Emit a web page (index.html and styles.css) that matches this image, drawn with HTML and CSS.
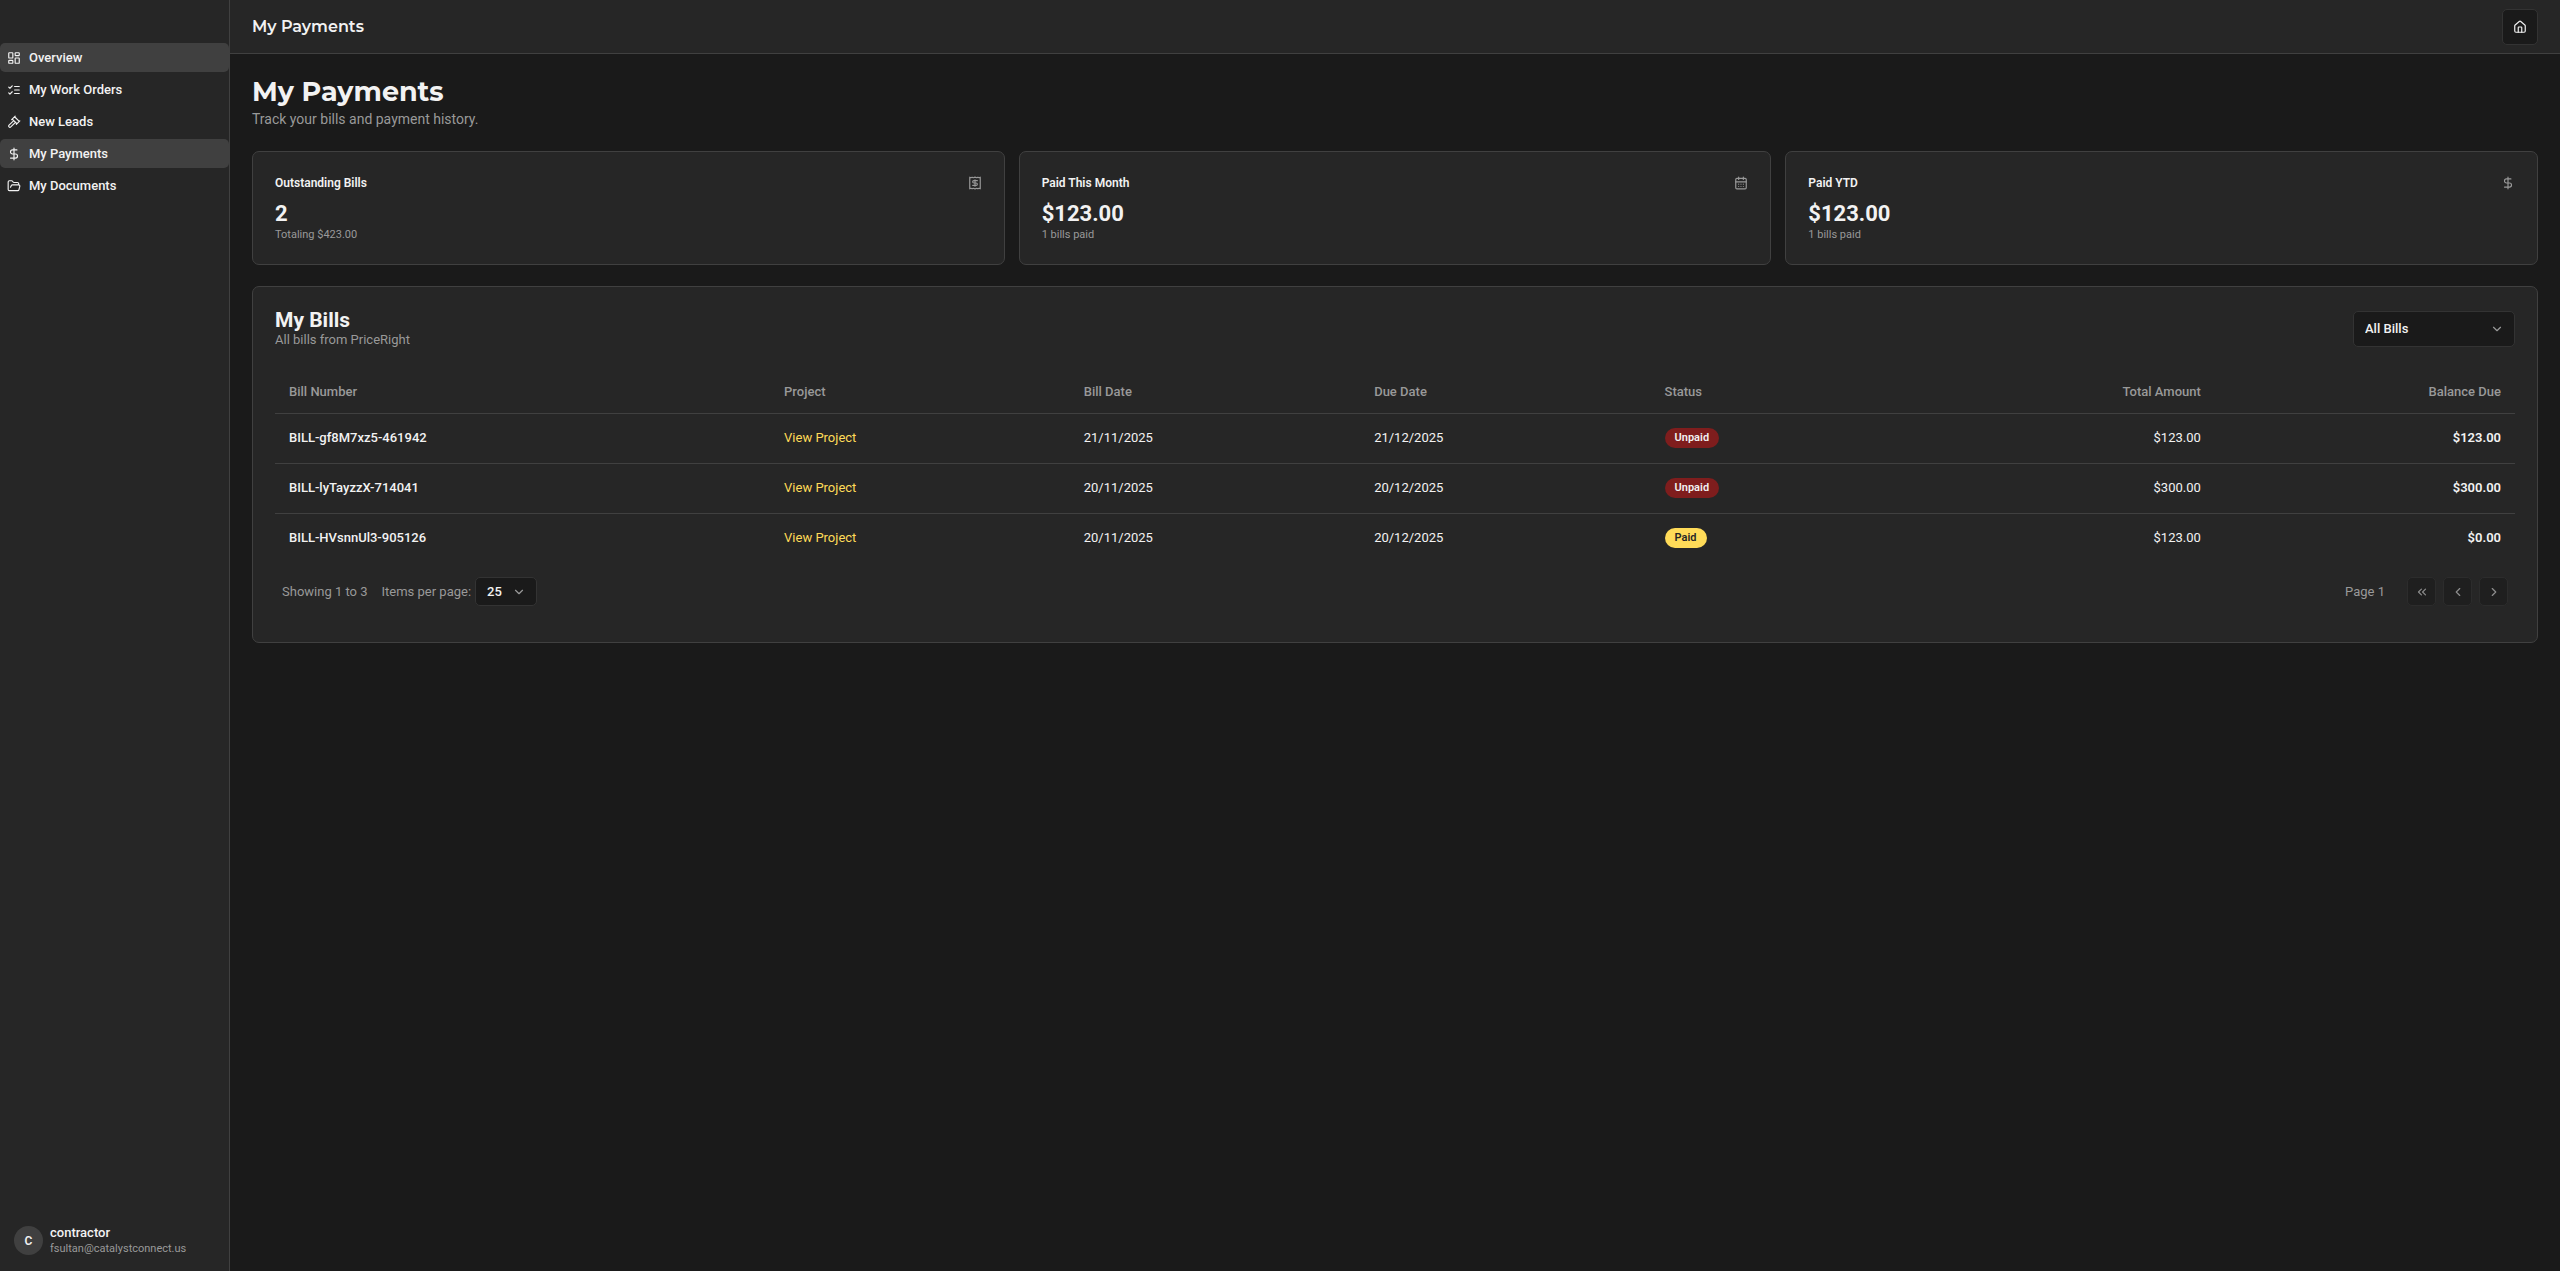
FILE: index.html
```html
<!DOCTYPE html>
<html lang="en">
<head>
<meta charset="utf-8">
<meta name="viewport" content="width=device-width, initial-scale=1">
<title>My Payments</title>
<link rel="stylesheet" href="styles.css">
</head>
<body>
<div class="app">
  <aside class="sidebar">
    <nav class="nav" aria-label="Main">
      <a class="nav-link active" href="#overview"><svg class="icon" viewBox="0 0 24 24"><rect x="3" y="3" width="7" height="9" rx="1"/><rect x="14" y="3" width="7" height="5" rx="1"/><rect x="14" y="12" width="7" height="9" rx="1"/><rect x="3" y="16" width="7" height="5" rx="1"/></svg>Overview</a>
      <a class="nav-link" href="#orders"><svg class="icon" viewBox="0 0 24 24"><path d="m3 17 2 2 4-4M3 7l2 2 4-4M13 6h8M13 12h8M13 18h8"/></svg>My Work Orders</a>
      <a class="nav-link" href="#leads"><svg class="icon" viewBox="0 0 24 24"><path d="m14.500 12.500-8 8a2.119 2.119 0 1 1-3-3l8-8M16 16l6-6M8 8l6-6M9 7l8 8M21 11l-8-8"/></svg>New Leads</a>
      <a class="nav-link active" href="#payments" aria-current="page"><svg class="icon" viewBox="0 0 24 24"><path d="M12 2v20M17 5H9.500a3.500 3.500 0 0 0 0 7h5a3.500 3.500 0 0 1 0 7H6"/></svg>My Payments</a>
      <a class="nav-link" href="#documents"><svg class="icon" viewBox="0 0 24 24"><path d="m6 14 1.500-2.900A2 2 0 0 1 9.240 10H20a2 2 0 0 1 1.940 2.500l-1.540 6a2 2 0 0 1-1.950 1.500H4a2 2 0 0 1-2-2V5a2 2 0 0 1 2-2h3.900a2 2 0 0 1 1.690.9l.81 1.200a2 2 0 0 0 1.670.9H18a2 2 0 0 1 2 2v2"/></svg>My Documents</a>
    </nav>
    <div class="user">
      <span class="avatar">C</span>
      <div class="user-text">
        <div class="user-name">contractor</div>
        <div class="user-mail">fsultan@catalystconnect.us</div>
      </div>
    </div>
  </aside>
  <div class="page">
    <header class="topbar">
      <span class="topbar-title">My Payments</span>
      <button class="home-button" type="button" aria-label="Home"><svg class="icon" viewBox="0 0 24 24"><path d="M15 21v-8a1 1 0 0 0-1-1h-4a1 1 0 0 0-1 1v8"/><path d="M3 10a2 2 0 0 1 .709-1.528l7-6a2 2 0 0 1 2.582 0l7 6A2 2 0 0 1 21 10v9a2 2 0 0 1-2 2H5a2 2 0 0 1-2-2z"/></svg></button>
    </header>
    <main class="content">
      <div>
        <h1 class="page-title">My Payments</h1>
        <p class="page-note">Track your bills and payment history.</p>
      </div>
      <section class="stats">
        <article class="card">
          <div class="stat-head"><h2 class="stat-title">Outstanding Bills</h2><svg class="icon" viewBox="0 0 24 24"><path d="M3 2v20l2-1 2 1 2-1 3 1 3-1 2 1 2-1 2 1V2l-2 1-2-1-2 1-3-1-3 1-2-1-2 1Z"/><path d="M16 8h-6a2 2 0 1 0 0 4h4a2 2 0 1 1 0 4H8M12 17.500v-11"/></svg></div>
          <div class="stat-value">2</div>
          <div class="stat-note">Totaling $423.00</div>
        </article>
        <article class="card">
          <div class="stat-head"><h2 class="stat-title">Paid This Month</h2><svg class="icon" viewBox="0 0 24 24"><path d="M8 2v4M16 2v4M3 10h18M8 14h.01M12 14h.01M16 14h.01M8 18h.01M12 18h.01M16 18h.01"/><rect x="3" y="4" width="18" height="18" rx="2"/></svg></div>
          <div class="stat-value">$123.00</div>
          <div class="stat-note">1 bills paid</div>
        </article>
        <article class="card">
          <div class="stat-head"><h2 class="stat-title">Paid YTD</h2><svg class="icon" viewBox="0 0 24 24"><path d="M12 2v20M17 5H9.500a3.500 3.500 0 0 0 0 7h5a3.500 3.500 0 0 1 0 7H6"/></svg></div>
          <div class="stat-value">$123.00</div>
          <div class="stat-note">1 bills paid</div>
        </article>
      </section>
      <section class="card">
        <div class="bills-head">
          <div>
            <h2 class="bills-title">My Bills</h2>
            <p class="bills-note">All bills from PriceRight</p>
          </div>
          <div class="select filter">
            <select aria-label="Filter bills"><option>All Bills</option><option>Unpaid</option><option>Paid</option></select>
            <svg class="icon chevron" viewBox="0 0 24 24"><path d="m6 9 6 6 6-6"/></svg>
          </div>
        </div>
        <table class="bills">
          <thead>
            <tr><th>Bill Number</th><th>Project</th><th>Bill Date</th><th>Due Date</th><th>Status</th><th class="num">Total Amount</th><th class="num">Balance Due</th></tr>
          </thead>
          <tbody>
            <tr><td class="medium">BILL-gf8M7xz5-461942</td><td><a class="link" href="#project">View Project</a></td><td>21/11/2025</td><td>21/12/2025</td><td><span class="badge unpaid">Unpaid</span></td><td class="num">$123.00</td><td class="num strong">$123.00</td></tr>
            <tr><td class="medium">BILL-lyTayzzX-714041</td><td><a class="link" href="#project">View Project</a></td><td>20/11/2025</td><td>20/12/2025</td><td><span class="badge unpaid">Unpaid</span></td><td class="num">$300.00</td><td class="num strong">$300.00</td></tr>
            <tr><td class="medium">BILL-HVsnnUl3-905126</td><td><a class="link" href="#project">View Project</a></td><td>20/11/2025</td><td>20/12/2025</td><td><span class="badge paid">Paid</span></td><td class="num">$123.00</td><td class="num strong">$0.00</td></tr>
          </tbody>
        </table>
        <div class="pager">
          <div class="pager-group">
            <span>Showing 1 to 3</span>
            <div class="per-page">
              <label for="per-page">Items per page:</label>
              <div class="select size">
                <select id="per-page"><option>25</option><option>50</option></select>
                <svg class="icon chevron" viewBox="0 0 24 24"><path d="m6 9 6 6 6-6"/></svg>
              </div>
            </div>
          </div>
          <div class="pager-group wide">
            <span>Page 1</span>
            <div class="pager-buttons">
              <button type="button" disabled aria-label="First page"><svg class="icon" viewBox="0 0 24 24"><path d="m11 17-5-5 5-5M18 17l-5-5 5-5"/></svg></button>
              <button type="button" disabled aria-label="Previous page"><svg class="icon" viewBox="0 0 24 24"><path d="m15 18-6-6 6-6"/></svg></button>
              <button type="button" disabled aria-label="Next page"><svg class="icon" viewBox="0 0 24 24"><path d="m9 18 6-6-6-6"/></svg></button>
            </div>
          </div>
        </div>
      </section>
    </main>
  </div>
</div>
</body>
</html>
```
FILE: styles.css
```css
:root {
  --bg: #1a1a1a;
  --panel: #262626;
  --line: #404040;
  --field-line: #333333;
  --text: #f2f2f2;
  --muted: #999999;
  --accent: #ffdb58;
}

*, *::before, *::after { box-sizing: border-box; }

body {
  margin: 0;
  background: var(--bg);
  color: var(--text);
  font: 400 13px/18px Roboto, "Liberation Sans", sans-serif;
}

h1, h2, p { margin: 0; }
button, select { font: inherit; color: inherit; }

.icon {
  width: 14px;
  height: 14px;
  flex: none;
  fill: none;
  stroke: currentColor;
  stroke-width: 2;
  stroke-linecap: round;
  stroke-linejoin: round;
}

.app { display: flex; min-height: 100vh; }

.sidebar {
  width: 230px;
  flex: none;
  display: flex;
  flex-direction: column;
  justify-content: space-between;
  padding: 43px 0 15px;
  background: var(--panel);
  border-right: 1px solid var(--line);
}

.nav { display: flex; flex-direction: column; gap: 3px; }

.nav-link {
  display: flex;
  align-items: center;
  gap: 8px;
  height: 29px;
  padding: 0 7px;
  border-radius: 5px;
  color: inherit;
  font-weight: 500;
  text-decoration: none;
}

.nav-link.active { background: var(--line); }

.user { display: flex; align-items: center; gap: 7px; padding: 0 14px; }

.avatar {
  display: grid;
  place-items: center;
  width: 29px;
  height: 29px;
  border-radius: 50%;
  background: var(--line);
  font-size: 12px;
  font-weight: 600;
}

.user-name { font-weight: 500; line-height: 16px; }
.user-mail { color: var(--muted); font-size: 11px; line-height: 15px; }

.page { flex: 1; min-width: 0; }

.topbar {
  display: flex;
  align-items: center;
  justify-content: space-between;
  height: 54px;
  padding: 0 22px;
  background: var(--panel);
  border-bottom: 1px solid var(--line);
}

.topbar-title, .page-title { font-family: Montserrat, Inter, sans-serif; }
.topbar-title { font-size: 16px; font-weight: 600; }

.home-button {
  display: grid;
  place-items: center;
  width: 36px;
  height: 36px;
  padding: 0;
  background: var(--bg);
  border: 1px solid var(--field-line);
  border-radius: 5px;
}

.content { display: flex; flex-direction: column; gap: 21px; padding: 22px; }

.page-title { font-size: 27px; font-weight: 700; line-height: 32px; }
.page-note { color: var(--muted); font-size: 14px; line-height: 22px; }

.stats { display: grid; grid-template-columns: repeat(3, 1fr); gap: 14px; }

.card {
  padding: 22px;
  background: var(--panel);
  border: 1px solid var(--line);
  border-radius: 7px;
}

.stat-head {
  display: flex;
  align-items: center;
  justify-content: space-between;
  margin-bottom: 7px;
}

.stat-head .icon { color: var(--muted); }
.stat-title { font-size: 12px; font-weight: 600; line-height: 18px; }
.stat-value { font-size: 22px; font-weight: 700; line-height: 29px; }
.stat-note { color: var(--muted); font-size: 11px; line-height: 14px; }

.bills-head {
  display: flex;
  align-items: center;
  justify-content: space-between;
  margin-bottom: 22px;
}

.bills-title { font-size: 21px; font-weight: 700; line-height: 22px; }
.bills-note { color: var(--muted); }

.select { display: grid; align-items: center; }
.select > * { grid-area: 1 / 1; }

.select select {
  appearance: none;
  width: 100%;
  padding: 0 11px;
  background: var(--bg);
  border: 1px solid var(--field-line);
  border-radius: 5px;
  font-weight: 500;
}

.chevron {
  justify-self: end;
  margin-right: 11px;
  color: var(--muted);
  pointer-events: none;
}

.filter { width: 162px; }
.filter select { height: 36px; }
.size { width: 62px; }
.size select { height: 29px; }

.bills { width: 100%; border-collapse: collapse; }

.bills th {
  height: 42px;
  padding: 0 14px;
  color: var(--muted);
  font-weight: 500;
  text-align: left;
}

.bills td { height: 50px; padding: 0 14px; }
.bills tr { border-bottom: 1px solid var(--line); }
.bills tbody tr:last-child { border-bottom: 0; }
.bills .num { text-align: right; }
.bills .medium { font-weight: 500; }
.bills .strong { font-weight: 600; }
.link { color: var(--accent); text-decoration: none; }

.badge {
  display: inline-block;
  padding: 0 10px;
  border-radius: 10px;
  font-size: 11px;
  font-weight: 600;
  line-height: 20px;
  vertical-align: middle;
}

.unpaid { background: #7f1d1d; }
.paid { background: var(--accent); color: #262626; }

.pager {
  display: flex;
  align-items: center;
  justify-content: space-between;
  padding: 14px 7px;
  color: var(--muted);
}

.pager-group { display: flex; align-items: center; gap: 14px; }
.pager-group.wide { gap: 22px; }
.per-page { display: flex; align-items: center; gap: 4px; }
.pager-buttons { display: flex; align-items: center; gap: 7px; }
.size select { color: var(--text); }

.pager-buttons button {
  display: grid;
  place-items: center;
  width: 29px;
  height: 29px;
  padding: 0;
  background: var(--bg);
  border: 1px solid var(--field-line);
  border-radius: 5px;
  color: var(--text);
  opacity: 0.5;
}
```
